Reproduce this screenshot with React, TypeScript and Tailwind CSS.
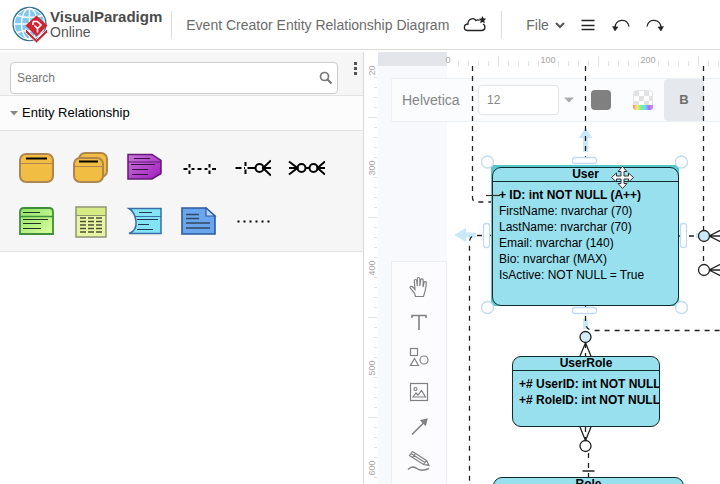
import type { ReactNode } from 'react'
import { useState } from 'react'

const tickCount = 80

const TopRuler = () => {
  const ticks = Array.from({ length: tickCount }, (_, i) => i)
  return (
    <svg className="h-3.5 w-full" aria-hidden="true">
      <rect x="0" y="0" width="69" height="14" fill="#e4e5ea" />
      {ticks.map((i) => {
        const x = 70 + i * 10
        if (i % 10 === 0) return null
        return <path key={i} d={i % 10 === 5 ? `M${x + 0.5} 4v10` : `M${x + 0.5} 9v5`} stroke="#dfe1e5" />
      })}
      {[0, 100, 200].map((value) => (
        <text key={value} x={70 + value} y="11" textAnchor="middle" fontSize="9" fill="#a3a3a3">
          {value}
        </text>
      ))}
    </svg>
  )
}

const SideRuler = () => {
  const ticks = Array.from({ length: tickCount }, (_, i) => i)
  return (
    <svg className="h-full w-3.5" aria-hidden="true">
      {ticks.map((i) => {
        const y = 1 + i * 10
        if (i % 10 === 0) return null
        return <path key={i} d={i % 10 === 5 ? `M4 ${y + 0.5}h9` : `M10 ${y + 0.5}h3`} stroke="#e0e2e6" />
      })}
      {[200, 300, 400, 500, 600].map((value) => (
        <text key={value} x="11" y={value - 198} textAnchor="middle" fontSize="9" fill="#a3a3a3" transform={`rotate(-90 11 ${value - 198})`}>
          {value}
        </text>
      ))}
    </svg>
  )
}

const Logo = () => (
  <svg className="h-[38px] w-[38px]" viewBox="0 0 38 38" aria-hidden="true">
    <circle cx="17.500" cy="18" r="16.500" fill="#7fc9ee" stroke="#3c6f8c" strokeWidth="1.300" />
    <g fill="none" stroke="#fff" strokeWidth="1.400">
      <circle cx="17.500" cy="18" r="15.300" strokeWidth="1" />
      <ellipse cx="17.500" cy="18" rx="8" ry="15.500" />
      <path d="M17.500 2.500v31M2 18h31M5 9.500q12.500 4 25 0M5 26.500q12.500-4 25 0" />
    </g>
    <path d="M24.500 9.500 35.500 19.500 24.500 30.500 13.500 19.500Z" fill="#cf2432" />
    <path d="M13.500 22.500v4L24.500 37l11-10.500v-4l-11 11Z" fill="#cf2432" stroke="#fff" strokeWidth="0.800" />
    <path d="M21 15.500h4.500l3.500 3.500-3.500 3.500-3-3M21 15.500v3.500M25.500 22.500v4" fill="none" stroke="#fff" strokeWidth="1.600" />
  </svg>
)

const Header = () => (
  <header className="flex h-[50px] shrink-0 items-center overflow-hidden border-b border-[#dcdcdc] bg-white pl-3 text-[#6b6b6b]">
    <a href="#home" className="flex shrink-0 items-center">
      <Logo />
      <span className="flex flex-col">
        <span className="text-[15px] leading-4 font-bold text-[#4a4a4a]">VisualParadigm</span>
        <span className="text-sm leading-[15px] text-[#555]">Online</span>
      </span>
    </a>
    <div className="ml-[9px] h-7 w-px shrink-0 bg-[#dcdcdc]" />
    <h1 className="ml-3.5 shrink-0 text-sm">Event Creator Entity Relationship Diagram</h1>
    <button className="ml-3.5 shrink-0" aria-label="Saved to cloud">
      <svg className="h-5 w-6" viewBox="0 0 24 20" fill="none" stroke="#222" strokeWidth="1.300">
        <path d="M20 9c3 1.500 2.500 6.500-1.500 6.500H4.500c-4.500-.5-4-6.500.5-6.500-.5-5 5.500-7 8-3.500 1.200-.8 2.500-.7 3.500 0" />
        <path d="m19.500 2.500.7 1.500 1.600.2-1.200 1.200.3 1.600-1.400-.8-1.400.8.3-1.600-1.200-1.200 1.600-.2Z" fill="#222" />
      </svg>
    </button>
    <div className="ml-3.5 h-7 w-px shrink-0 bg-[#dcdcdc]" />
    <button className="ml-6 flex shrink-0 items-center gap-1.5 text-sm">
      File
      <svg className="h-2.5 w-2.5" viewBox="0 0 10 10" fill="none" stroke="#555" strokeWidth="2">
        <path d="m1 3 4 4 4-4" />
      </svg>
    </button>
    <button className="ml-[15px] shrink-0" aria-label="Menu">
      <svg className="h-4 w-4" viewBox="0 0 16 16" stroke="#222" strokeWidth="1.300">
        <path d="M1.500 3.500h13M1.500 8.500h13M1.500 12.500h13" />
      </svg>
    </button>
    <button className="ml-4 shrink-0" aria-label="Undo">
      <svg className="h-4 w-[18px]" viewBox="0 0 18 16" fill="none" stroke="#222" strokeWidth="1.300">
        <path d="M3 11C3 1.500 15.500.5 17 9.500" />
        <path d="M.5 9.500 6 10l-3 4Z" fill="#222" strokeWidth="0.500" />
      </svg>
    </button>
    <button className="ml-4 shrink-0" aria-label="Redo">
      <svg className="h-4 w-[18px]" viewBox="0 0 18 16" fill="none" stroke="#222" strokeWidth="1.300">
        <path d="M15 11C15 1.500 2.500.5 1 9.500" />
        <path d="M17.500 9.500 12 10l3 4Z" fill="#222" strokeWidth="0.500" />
      </svg>
    </button>
  </header>
)

const shapes: { name: string; icon: ReactNode }[] = [
  {
    name: 'Entity',
    icon: (
      <g stroke="#b08650" strokeWidth="2" fill="#f1bd42">
        <rect x="2" y="5" width="33" height="28" rx="6" />
        <path d="M2 14.500h33" strokeWidth="1" />
        <path d="M8 9.500h21" stroke="#000" />
      </g>
    ),
  },
  {
    name: 'Entity view',
    icon: (
      <g stroke="#b08650" strokeWidth="2" fill="#f1bd42">
        <rect x="7" y="4" width="28" height="24" rx="6" />
        <rect x="2" y="9" width="29" height="24" rx="6" />
        <path d="M2 17.500h29" strokeWidth="1" />
        <path d="M7 12.500h19" stroke="#000" />
      </g>
    ),
  },
  {
    name: 'Trigger',
    icon: (
      <>
        <path d="M2 5.500h24l9 6v13l-9 5.500H2Z" fill="url(#purple)" stroke="#641878" strokeWidth="1.500" />
        <path d="M2 13h33" stroke="#641878" />
        <path d="M8 9.500h16M5 15.500h24M6 20.500h16M6 25.500h16" stroke="#3a1144" />
      </>
    ),
  },
  {
    name: 'One to one',
    icon: (
      <path
        d="M3.500 20h4M11.500 20h3M17.500 20h4M24.500 20h3M32 20h4M9.500 15v3.500M9.500 21.500V25M29.500 15v3.500M29.500 21.500V25"
        stroke="#000"
        strokeWidth="2"
      />
    ),
  },
  {
    name: 'One to many',
    icon: (
      <g fill="none" stroke="#000" strokeWidth="2">
        <path d="M1.500 19h6M10 19h1M13.500 19H21M29 19h8M11.500 13v4M11.500 20.500v4.500M37 11.500l-8 7.500 8 7.500" />
        <circle cx="25.500" cy="19" r="4" />
      </g>
    ),
  },
  {
    name: 'Many to many',
    icon: (
      <g fill="none" stroke="#000" strokeWidth="2">
        <path d="M1 19h8M17.500 19h4M29.500 19H37M1 12.500 9.500 19 1 25.500M37 12.500 29.500 19l7.500 6.500" />
        <circle cx="13.500" cy="19" r="4" />
        <circle cx="25.500" cy="19" r="4" />
      </g>
    ),
  },
  {
    name: 'Stored procedures',
    icon: (
      <>
        <path d="M2 31V9q0-4 4-4h25q4 0 4 4v22Z" fill="url(#green)" stroke="#3f8f3a" strokeWidth="1.800" />
        <path d="M2 13.500h33" stroke="#3f8f3a" strokeWidth="1.500" />
        <path d="M5 9.500h17M5 16.500h25M5 20.500h18M5 25.500h18" stroke="#22331a" />
      </>
    ),
  },
  {
    name: 'Result set',
    icon: (
      <>
        <rect x="4" y="4" width="30" height="30" fill="#e8f5a5" stroke="#8c9470" strokeWidth="1.500" />
        <rect x="5" y="5" width="28" height="7" fill="#d8ec85" />
        <path d="M4 12.500h30" stroke="#8c9470" />
        <path d="M8 15h22M8 18.500h22M8 22h22M8 25.500h22M8 29h22" stroke="#4a5030" strokeWidth="1.400" strokeDasharray="6 2" />
      </>
    ),
  },
  {
    name: 'Sequence',
    icon: (
      <>
        <path d="M3 5.500h32v25H3q8-3 7-12Q9 9 3 5.500Z" fill="#85e3f6" stroke="#3a6ea8" strokeWidth="1.500" />
        <path d="M9 13.500h26" stroke="#3a6ea8" />
        <path d="M13 9.500h13M11 16.500h21M12 21.500h11M11 26.500h16" stroke="#1f3b4d" />
      </>
    ),
  },
  {
    name: 'Note',
    icon: (
      <>
        <path d="M2 5h24l9 8v18H2Z" fill="#6aa6ee" stroke="#2c5aa0" strokeWidth="1.600" />
        <path d="M26 5v8h9Z" fill="#b9d8fa" stroke="#2c5aa0" strokeWidth="1.200" />
        <path d="M6 11.500h13M6 15.500h13M6 20h24M6 25h24" stroke="#33475f" strokeWidth="1.400" />
      </>
    ),
  },
  {
    name: 'Note anchor',
    icon: <path d="M3.500 18.500h33" stroke="#000" strokeWidth="2" strokeDasharray="2 4" />,
  },
]

const Sidebar = () => {
  const [open, setOpen] = useState(true)

  return (
    <aside className="w-[364px] shrink-0 overflow-hidden border-r border-[#d8d8d8] bg-white">
      <div className="flex h-11 items-start border-b border-[#e2e2e2] bg-[#f6f6f6] pt-2.5 pl-2.5">
        <label className="flex h-8 w-[328px] shrink-0 items-center rounded border border-[#ccc] bg-white pr-1">
          <input
            type="search"
            placeholder="Search"
            aria-label="Search shapes"
            className="min-w-0 flex-1 px-1.5 text-xs placeholder:text-[#777] focus:outline-none"
          />
          <svg className="h-3.5 w-3.5" viewBox="0 0 14 14" fill="none" stroke="#777">
            <circle cx="5.500" cy="5.500" r="4" strokeWidth="1.700" />
            <path d="m8.500 8.500 4 4" strokeWidth="2.200" />
          </svg>
        </label>
        <button className="ml-3.5 shrink-0" aria-label="More options">
          <svg className="h-3.5 w-1.5" viewBox="0 0 6 14" fill="#555">
            <path d="M2 0h3v3H2zM2 5h3v3H2zM2 10h3v3H2z" />
          </svg>
        </button>
      </div>
      <button
        onClick={() => setOpen(!open)}
        aria-expanded={open}
        className="flex h-[35px] w-full items-center gap-1 border-b border-[#e2e2e2] bg-[#fcfcfc] pl-2.5 text-[13px] text-black"
      >
        <svg className="h-2 w-2" viewBox="0 0 8 8" fill="#888">
          <path d="M0 2h8L4 6.500Z" />
        </svg>
        Entity Relationship
      </button>
      {open && (
        <div className="flex flex-wrap border-b border-[#e2e2e2] bg-[#f6f6f6] px-[9px] pt-2.5 pb-0.5">
          {shapes.map(({ name, icon }) => (
            <button key={name} className="flex h-[54px] w-[54px] items-center justify-center" aria-label={name}>
              <svg className="h-[38px] w-[37px]" viewBox="0 0 37 38">
                <defs>
                  <linearGradient id="purple" x1="0" y1="0" x2="1" y2="1">
                    <stop offset="0" stopColor="#c878dc" />
                    <stop offset="1" stopColor="#a01cba" />
                  </linearGradient>
                  <linearGradient id="green" x1="0" y1="0" x2="1" y2="1">
                    <stop offset="0" stopColor="#8fe26c" />
                    <stop offset="1" stopColor="#dcff9c" />
                  </linearGradient>
                </defs>
                {icon}
              </svg>
            </button>
          ))}
        </div>
      )}
    </aside>
  )
}

const FormatBar = () => (
  <div className="flex h-11 items-center overflow-hidden border border-r-0 border-[#edf1f4] bg-[#fafcfd] pl-2.5 text-[#858585]">
    <button className="w-[76px] shrink-0 text-left text-sm">Helvetica</button>
    <input
      defaultValue="12"
      aria-label="Font size"
      className="h-[30px] w-[81px] shrink-0 rounded-sm border border-[#e0e4e8] bg-white px-2 text-xs focus:outline-none"
    />
    <button className="flex w-5 shrink-0 justify-center" aria-label="Font sizes">
      <svg className="h-2 w-2.5" viewBox="0 0 10 8" fill="#aaa">
        <path d="M0 1.500h10L5 6.500Z" />
      </svg>
    </button>
    <button className="ml-3 h-5 w-5 shrink-0 rounded bg-[#808080]" aria-label="Text color" />
    <button className="ml-[22px] h-5 w-5 shrink-0" aria-label="Background color">
      <svg className="h-5 w-5" viewBox="0 0 20 20">
        <defs>
          <linearGradient id="hue">
            <stop offset="0" stopColor="#ff8a7a" />
            <stop offset="0.200" stopColor="#f7ef70" />
            <stop offset="0.400" stopColor="#7df08c" />
            <stop offset="0.600" stopColor="#70d8fa" />
            <stop offset="0.800" stopColor="#9a78f8" />
            <stop offset="1" stopColor="#f57af0" />
          </linearGradient>
        </defs>
        <rect x="0.500" y="0.500" width="19" height="19" rx="3" fill="#fff" stroke="#e4e4e4" />
        <path d="M1 1h5v5H1zM11 1h5v5h-5zM6 6h5v5H6zM16 6h3.500v5H16zM1 11h5v5H1zM11 11h5v5h-5z" fill="#e2e2e2" />
        <path d="M0 15h20v2a3 3 0 0 1-3 3H3a3 3 0 0 1-3-3Z" fill="url(#hue)" />
      </svg>
    </button>
    <button className="ml-[11px] h-full w-10 shrink-0 rounded-sm bg-[#e5e8ec] text-[13px] font-bold text-[#6e6e6e]">B</button>
  </div>
)

const tools: { name: string; icon: ReactNode }[] = [
  {
    name: 'Pan',
    icon: (
      <path d="M8.500 21.500 7.500 18 3.500 13.500q-1-1.800.5-2.200 1.300-.1 2.300 1.200L8 14.500 7.300 6q0-1.500 1.200-1.500T9.800 6L10.300 11V4q.1-1.500 1.300-1.500T12.900 4v7l.8-6q.3-1.300 1.400-1.200t1.100 1.500L16 12l1-4.500q.4-1.200 1.500-.9t.9 1.700q-.6 5-1.400 8l-1.500 5.200Z" />
    ),
  },
  { name: 'Text', icon: <path d="M5 8V5.500h14V8M12 5.500V20" strokeWidth="1.600" /> },
  {
    name: 'Shapes',
    icon: (
      <>
        <rect x="3.500" y="3.500" width="7" height="7" />
        <path d="m7.500 13.500 4 7h-8Z" />
        <circle cx="17" cy="15" r="4" />
      </>
    ),
  },
  {
    name: 'Image',
    icon: (
      <>
        <rect x="3.500" y="3.500" width="17" height="17" />
        <circle cx="8.500" cy="9" r="1.500" />
        <path d="M6 17l3-4 2 2 3.500-4.500L18.500 17Z" />
      </>
    ),
  },
  {
    name: 'Arrow',
    icon: (
      <>
        <path d="M5 19.500 17 7.500" strokeWidth="1.600" />
        <path d="M20 4 18.500 10l-4.500-4.500Z" fill="#808080" />
      </>
    ),
  },
  {
    name: 'Pencil',
    icon: (
      <>
        <path d="M2.500 5.500 5.500 1.500 19.500 10.500 22 15.500 16.500 14.500ZM5.500 7.500l3-4M16.500 14.500l3-4M4 3.500 18 12.500M19.500 14.500l2.500 1" />
        <path d="M1 19.500q4-4 8-1.500 5 4 13 .5" strokeWidth="1.500" />
      </>
    ),
  },
]

const ToolPanel = () => (
  <div className="flex w-14 flex-1 flex-col border border-b-0 border-[#eaeef2] bg-[#fcfcfe] pt-[7px]">
    {tools.map(({ name, icon }) => (
      <button key={name} className="flex h-[35px] shrink-0 items-center justify-center" aria-label={name}>
        <svg className="h-6 w-6" viewBox="0 0 24 24" fill="none" stroke="#808080" strokeWidth="1.200">
          {icon}
        </svg>
      </button>
    ))}
  </div>
)

const Connectors = () => (
  <svg className="absolute inset-0 h-full w-full" fill="none" stroke="#222" strokeWidth="1.300">
    <g fill="#c9e8fa" stroke="none">
      <path d="m207.500 62 7 10h-4.500v14h-5v-14h-4.500Z" />
      <path d="m76 169 12-7v4.500h10v5h-10v4.500Z" />
      <path d="M205 253h5v10h-5zM318 167h14v5h-14z" />
    </g>
    <g strokeDasharray="5 5">
      <path d="M94.500 0v132q0 4 5 4h15" />
      <path d="M207.500 0v100" />
      <path d="M325.500 0v204" />
      <path d="M114 169.500H98q-6.500 0-6.500 7V2000" />
      <path d="M207.500 240v16q0 8 8 8.500H2000" />
      <path d="M301 170h20" />
      <path d="M207.500 277v13M207.500 361v13M210.500 387v25" />
    </g>
    <path d="m207.500 277-5.500 13m5.500-13 5.500 13M202 361l5.500 13.500L213 361M204.500 405h12" />
    <path d="m331 170 14-7m-14 7h14m-14 0 14 7M331 204l14-7m-14 7h14m-14 0 14 7" />
    <circle cx="207.500" cy="271" r="5.500" fill="#d5edfb" />
    <circle cx="207.500" cy="380" r="5.500" fill="#fff" />
    <circle cx="326" cy="170" r="5.500" fill="#cbe9fb" />
    <circle cx="326" cy="204" r="5.500" fill="#fff" />
  </svg>
)

const Handles = () => (
  <svg className="absolute inset-0 h-full w-full">
    <path d="M108 129.500h14" stroke="#333" strokeWidth="1.200" />
    <g fill="#fff" stroke="#c4daf0" strokeWidth="1.300">
      <circle cx="109.500" cy="96" r="6" />
      <circle cx="303.500" cy="96" r="6" />
      <circle cx="109.500" cy="241.500" r="6" />
      <circle cx="303.500" cy="241.500" r="6" />
      <rect x="194.500" y="91.500" width="24" height="6" rx="2.500" />
      <rect x="194.500" y="241.500" width="24" height="6" rx="2.500" />
      <rect x="105.500" y="157.500" width="6" height="24" rx="2.500" />
      <rect x="302.500" y="157.500" width="6" height="24" rx="2.500" />
    </g>
    {/* move cursor */}
    <path
      d="m244.500 100.500 4.500 5h-3v4.500h4.500v-3l5 4.500-5 4.500v-3h-4.500v4.500h3l-4.500 5-4.500-5h3v-4.500h-4.500v3l-5-4.500 5-4.500v3h4.500v-4.500h-3Z"
      fill="#fff"
      stroke="#333"
    />
  </svg>
)

type EntityProps = {
  name: string
  className: string
  children?: ReactNode
}

const Entity = ({ name, className, children }: EntityProps) => (
  <section className={`absolute overflow-hidden rounded-[9px] border border-[#0e2b30] bg-[#99e0ee] text-xs text-black ${className}`}>
    <h2 className="h-3.5 border-b border-[#0e2b30] text-center leading-3 font-bold">{name}</h2>
    <ul className="px-1.5 pt-[5px] leading-4 whitespace-nowrap">{children}</ul>
  </section>
)

const Diagram = () => (
  <div className="pointer-events-none absolute inset-0">
    <Connectors />
    <div className="absolute top-[99px] left-[113px] h-[141px] w-[188px] bg-[#55c8cc]" />
    <Entity name="User" className="top-[101px] left-[114px] h-[139px] w-[187px]">
      <li className="font-bold">+ ID: int NOT NULL (A++)</li>
      <li>FirstName: nvarchar (70)</li>
      <li>LastName: nvarchar (70)</li>
      <li>Email: nvarchar (140)</li>
      <li>Bio: nvarchar (MAX)</li>
      <li>IsActive: NOT NULL = True</li>
    </Entity>
    <Entity name="UserRole" className="top-[290px] left-[134px] h-[71px] w-[148px]">
      <li className="font-bold">+# UserID: int NOT NULL</li>
      <li className="font-bold">+# RoleID: int NOT NULL</li>
    </Entity>
    <Entity name="Role" className="top-[411px] left-[115px] h-[90px] w-[191px]" />
    <Handles />
  </div>
)

const App = () => {
  return (
    <div className="flex h-screen flex-col overflow-hidden bg-white font-['Liberation_Sans',Arial,sans-serif]">
      <Header />
      <div className="flex min-h-0 flex-1 pt-0.5">
        <Sidebar />
        <main className="grid min-w-0 flex-1 grid-cols-[14px_minmax(0,1fr)] grid-rows-[14px_minmax(0,1fr)]">
          <div />
          <TopRuler />
          <SideRuler />
          <div className="relative flex overflow-hidden">
            <div className="flex min-w-0 flex-1 flex-col bg-[linear-gradient(to_right,#f7f9fc_69px,#fff_69px)] pt-3 pl-[13px]">
              <FormatBar />
              <div className="h-[139px] shrink-0" />
              <ToolPanel />
            </div>
            <Diagram />
          </div>
        </main>
      </div>
    </div>
  )
}

export default App
